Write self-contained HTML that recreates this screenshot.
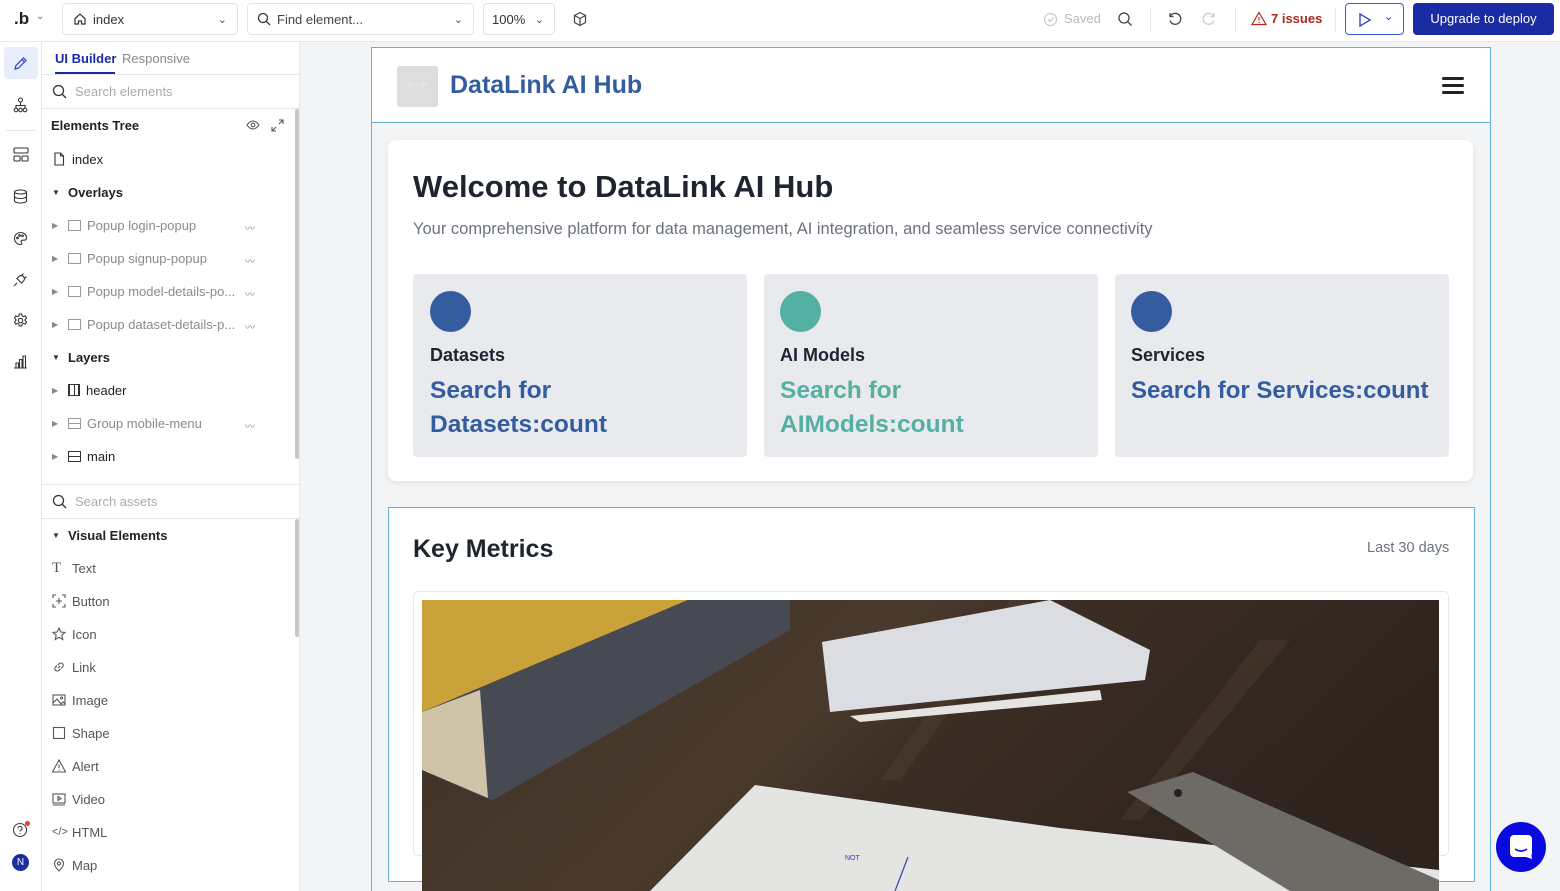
<!DOCTYPE html>
<html><head><meta charset="utf-8"><style>
*{box-sizing:border-box;margin:0;padding:0}
body{width:1560px;height:891px;overflow:hidden;font-family:"Liberation Sans",sans-serif;background:#f3f4f6;position:relative;color:#222}
.abs{position:absolute}
.top{left:0;top:0;width:1560px;height:42px;background:#fff;border-bottom:1px solid #e5e7eb}
.box{position:absolute;top:3px;height:32px;border:1px solid #e2e4e8;border-radius:4px;font-size:13px;color:#333;display:flex;align-items:center}
.rail{left:0;top:42px;width:42px;height:849px;background:#fff;border-right:1px solid #e5e7eb}
.side{left:42px;top:42px;width:258px;height:849px;background:#fff;border-right:1px solid #e5e7eb}
.row{position:absolute;left:10px;font-size:13px;color:#222;display:flex;align-items:center;gap:6px;height:20px}
.g{color:#8a8a8a}
.tri{font-size:8px;color:#333;width:10px}
.eye{position:absolute;left:203px;font-size:10px;color:#888}
.ic{width:14px;height:14px;display:inline-block}
</style></head><body>
<div class="abs top">
 <div class="abs" style="left:14px;top:9px;font-size:17px;font-weight:bold;color:#222">.b</div>
 <div class="abs" style="left:36px;top:11px;font-size:10px;color:#666">⌄</div>
 <div class="box" style="left:62px;width:176px;padding-left:10px"><svg class="ic" viewBox="0 0 14 14" fill="none" stroke="#333" stroke-width="1.2"><path d="M2 6.5L7 2l5 4.5V12H8.5V9h-3v3H2z"/></svg><span style="margin-left:6px">index</span><span style="position:absolute;right:10px;color:#555;font-size:11px">⌄</span></div>
 <div class="box" style="left:247px;width:227px;padding-left:9px"><svg class="ic" viewBox="0 0 14 14" fill="none" stroke="#333" stroke-width="1.3"><circle cx="6" cy="6" r="4.5"/><path d="M9.3 9.3L13 13"/></svg><span style="margin-left:6px;color:#444">Find element...</span><span style="position:absolute;right:10px;color:#555;font-size:11px">⌄</span></div>
 <div class="box" style="left:483px;width:72px;padding-left:8px">100%<span style="position:absolute;right:10px;color:#555;font-size:11px">⌄</span></div>
 <svg class="abs" style="left:572px;top:11px" width="16" height="16" viewBox="0 0 16 16" fill="none" stroke="#444" stroke-width="1.2"><path d="M8 1.5l5.5 3v7L8 14.5l-5.5-3v-7zM2.5 4.5L8 7.5l5.5-3M8 7.5v7"/></svg>
 <svg class="abs" style="left:1043px;top:12px" width="15" height="15" viewBox="0 0 15 15" fill="none" stroke="#c8c8c8" stroke-width="1.2"><circle cx="7.5" cy="7.5" r="6"/><path d="M5 7.5l2 2 3.5-4"/></svg>
 <div class="abs" style="left:1064px;top:11px;font-size:13px;color:#bbb">Saved</div>
 <svg class="abs" style="left:1117px;top:11px" width="16" height="16" viewBox="0 0 16 16" fill="none" stroke="#444" stroke-width="1.3"><circle cx="7" cy="7" r="5"/><path d="M10.6 10.6L14.5 14.5"/></svg>
 <div class="abs" style="left:1150px;top:8px;width:1px;height:24px;background:#e5e7eb"></div>
 <svg class="abs" style="left:1167px;top:11px" width="16" height="16" viewBox="0 0 16 16" fill="none" stroke="#444" stroke-width="1.3"><path d="M3.5 5A5.5 5.5 0 1 1 3 9.5"/><path d="M3 2v3.5h3.5"/></svg>
 <svg class="abs" style="left:1201px;top:11px" width="16" height="16" viewBox="0 0 16 16" fill="none" stroke="#ccc" stroke-width="1.3"><path d="M12.5 5A5.5 5.5 0 1 0 13 9.5"/><path d="M13 2v3.5H9.5"/></svg>
 <div class="abs" style="left:1235px;top:8px;width:1px;height:24px;background:#e5e7eb"></div>
 <svg class="abs" style="left:1251px;top:11px" width="16" height="15" viewBox="0 0 16 15" fill="none" stroke="#b3261e" stroke-width="1.2"><path d="M8 1.5L15 13.5H1z"/><path d="M8 6v3.5M8 11v1"/></svg>
 <div class="abs" style="left:1271px;top:11px;font-size:13px;color:#b3261e;font-weight:bold">7 issues</div>
 <div class="abs" style="left:1335px;top:8px;width:1px;height:24px;background:#e5e7eb"></div>
 <div class="abs" style="left:1345px;top:3px;width:59px;height:32px;border:1px solid #3b5bdb;border-radius:4px"><svg class="abs" style="left:12px;top:8px" width="14" height="16" viewBox="0 0 14 16" fill="none" stroke="#2233cc" stroke-width="1.3"><path d="M2 2l10 6-10 6z"/></svg><span class="abs" style="left:38px;top:6px;font-size:11px;color:#2233cc">⌄</span></div>
 <div class="abs" style="left:1413px;top:3px;width:141px;height:32px;background:#1a2ba3;border-radius:4px;color:#fff;font-size:13px;text-align:center;line-height:32px">Upgrade to deploy</div>
</div>
<div class="abs rail">
 <div class="abs" style="left:4px;top:5px;width:34px;height:32px;background:#e8edfb;border-radius:4px"></div>
 <svg class="abs" style="left:13px;top:14px" width="15" height="15" viewBox="0 0 15 15" fill="none" stroke="#2b3fc0" stroke-width="1.2"><path d="M2 13l1-3.5 7.5-7.5 2.5 2.5L5.5 12z M9 3.5l2.5 2.5"/></svg>
 <svg class="abs" style="left:13px;top:55px" width="15" height="16" viewBox="0 0 15 16" fill="none" stroke="#333" stroke-width="1.1"><circle cx="7.5" cy="3" r="2"/><path d="M7.5 5v3M3 11V8.5h9V11"/><circle cx="3" cy="13" r="1.8"/><circle cx="7.5" cy="13" r="1.8"/><circle cx="12" cy="13" r="1.8"/></svg>
 <div class="abs" style="left:6px;top:88px;width:30px;height:1px;background:#e5e7eb"></div>
 <svg class="abs" style="left:13px;top:105px" width="16" height="15" viewBox="0 0 16 15" fill="none" stroke="#333" stroke-width="1.1"><rect x="1" y="1" width="14" height="5" rx="1"/><rect x="1" y="9" width="6" height="5" rx="1"/><rect x="9" y="9" width="6" height="5" rx="1"/></svg>
 <svg class="abs" style="left:13px;top:147px" width="15" height="15" viewBox="0 0 15 15" fill="none" stroke="#333" stroke-width="1.1"><ellipse cx="7.5" cy="3" rx="6" ry="2"/><path d="M1.5 3v9c0 1 2.7 2 6 2s6-1 6-2V3M1.5 7.5c0 1 2.7 2 6 2s6-1 6-2"/></svg>
 <svg class="abs" style="left:13px;top:189px" width="15" height="15" viewBox="0 0 15 15" fill="none" stroke="#333" stroke-width="1.1"><path d="M7.5 1.5a6 6 0 1 0 0 12c1.5 0 1.5-1.5.8-2.3-.7-.8 0-2 1-2h2.2a2.5 2.5 0 0 0 2-2.5c0-2.8-2.7-5.2-6-5.2z"/><circle cx="4.5" cy="7" r=".8"/><circle cx="6.5" cy="4.5" r=".8"/><circle cx="9.5" cy="4.8" r=".8"/></svg>
 <svg class="abs" style="left:13px;top:230px" width="15" height="15" viewBox="0 0 15 15" fill="none" stroke="#333" stroke-width="1.1"><path d="M1 14l3-3M4 6.5l4.5 4.5 2-2a3 3 0 0 0-4.5-4.5zM8 4l2.5-2.5M11 7l2.5-2.5"/></svg>
 <svg class="abs" style="left:13px;top:271px" width="15" height="15" viewBox="0 0 15 15" fill="none" stroke="#333" stroke-width="1.1"><circle cx="7.5" cy="7.5" r="2.2"/><path d="M6.3 1h2.4l.4 1.8 1.5.8 1.7-.7 1.2 2-1.3 1.3v1.6l1.3 1.3-1.2 2-1.7-.7-1.5.8-.4 1.8H6.3l-.4-1.8-1.5-.8-1.7.7-1.2-2 1.3-1.3V6.2L1.5 4.9l1.2-2 1.7.7 1.5-.8z"/></svg>
 <svg class="abs" style="left:13px;top:312px" width="15" height="15" viewBox="0 0 15 15" fill="none" stroke="#333" stroke-width="1.1"><path d="M1 14h13M3 14V9h2.5v5M6.5 14V5.5H9V14M10 14V2h2.5v12"/></svg>
 <svg class="abs" style="left:12px;top:780px" width="16" height="16" viewBox="0 0 16 16" fill="none" stroke="#444" stroke-width="1.1"><circle cx="8" cy="8" r="6.5"/><path d="M6 6.3a2 2 0 1 1 2.5 2c-.5.2-.5.6-.5 1.2M8 11.3v.7"/></svg>
 <div class="abs" style="left:25px;top:779px;width:5px;height:5px;border-radius:50%;background:#e53935"></div>
 <div class="abs" style="left:12px;top:812px;width:17px;height:17px;border-radius:50%;background:#1a2ba3;color:#fff;font-size:10px;text-align:center;line-height:17px">N</div>
</div>
<div class="abs side">
 <div class="abs" style="left:13px;top:9px;font-size:13px;color:#1a2ba3;font-weight:bold">UI Builder</div>
 <div class="abs" style="left:13px;top:30px;width:60px;height:2px;background:#1a2ba3"></div>
 <div class="abs" style="left:80px;top:9px;font-size:13px;color:#888">Responsive</div>
 <div class="abs" style="left:0;top:32px;width:258px;height:1px;background:#e5e7eb"></div>
 <svg class="abs" style="left:10px;top:42px" width="15" height="15" viewBox="0 0 15 15" fill="none" stroke="#333" stroke-width="1.3"><circle cx="6.5" cy="6.5" r="5"/><path d="M10 10l4 4"/></svg>
 <div class="abs" style="left:33px;top:42px;font-size:13px;color:#aaa">Search elements</div>
 <div class="abs" style="left:0;top:66px;width:258px;height:1px;background:#e5e7eb"></div>
 <div class="abs" style="left:253px;top:67px;width:4px;height:350px;background:#c8c8c8;border-radius:2px"></div>
 <div class="abs" style="left:9px;top:76px;font-size:13px;font-weight:bold;color:#222">Elements Tree</div>
 <svg class="abs" style="left:204px;top:78px" width="14" height="10" viewBox="0 0 14 10" fill="none" stroke="#555" stroke-width="1.1"><path d="M1 5s2.5-4 6-4 6 4 6 4-2.5 4-6 4-6-4-6-4z"/><circle cx="7" cy="5" r="1.8"/></svg>
 <svg class="abs" style="left:229px;top:77px" width="13" height="13" viewBox="0 0 13 13" fill="none" stroke="#555" stroke-width="1.1"><path d="M8 1h4v4M12 1L8 5M5 12H1V8M1 12l4-4"/></svg>
 <div class="row" style="top:107px"><svg class="ic" viewBox="0 0 14 14" fill="none" stroke="#333" stroke-width="1.1"><path d="M3 1h5.5L11.5 4v9H3zM8.5 1v3h3"/></svg>index</div>
 <div class="row" style="top:140px"><span class="tri">▼</span><b>Overlays</b></div>
 <div class="row g" style="top:173px"><span class="tri" style="color:#888">▶</span><span style="width:13px;height:11px;border:1px solid #999;display:inline-block"></span>Popup login-popup</div><div class="eye" style="top:178px">〰</div>
 <div class="row g" style="top:206px"><span class="tri" style="color:#888">▶</span><span style="width:13px;height:11px;border:1px solid #999;display:inline-block"></span>Popup signup-popup</div><div class="eye" style="top:211px">〰</div>
 <div class="row g" style="top:239px"><span class="tri" style="color:#888">▶</span><span style="width:13px;height:11px;border:1px solid #999;display:inline-block"></span>Popup model-details-po...</div><div class="eye" style="top:244px">〰</div>
 <div class="row g" style="top:272px"><span class="tri" style="color:#888">▶</span><span style="width:13px;height:11px;border:1px solid #999;display:inline-block"></span>Popup dataset-details-p...</div><div class="eye" style="top:277px">〰</div>
 <div class="row" style="top:305px"><span class="tri">▼</span><b>Layers</b></div>
 <div class="row" style="top:338px"><span class="tri" style="color:#888">▶</span><span style="width:12px;height:12px;border:1.3px solid #333;display:inline-block;border-left-width:2px;border-right-width:2px;background:linear-gradient(90deg,transparent 4px,#333 4px,#333 5px,transparent 5px)"></span>header</div>
 <div class="row g" style="top:371px"><span class="tri" style="color:#888">▶</span><span style="width:13px;height:11px;border:1px solid #999;display:inline-block;background:linear-gradient(transparent 4px,#999 4px,#999 5px,transparent 5px)"></span>Group mobile-menu</div><div class="eye" style="top:376px">〰</div>
 <div class="row" style="top:404px"><span class="tri" style="color:#888">▶</span><span style="width:13px;height:11px;border:1.3px solid #333;display:inline-block;background:linear-gradient(transparent 4px,#333 4px,#333 5px,transparent 5px)"></span>main</div>
 <div class="abs" style="left:0;top:442px;width:258px;height:1px;background:#e5e7eb"></div>
 <svg class="abs" style="left:10px;top:452px" width="15" height="15" viewBox="0 0 15 15" fill="none" stroke="#333" stroke-width="1.3"><circle cx="6.5" cy="6.5" r="5"/><path d="M10 10l4 4"/></svg>
 <div class="abs" style="left:33px;top:452px;font-size:13px;color:#aaa">Search assets</div>
 <div class="abs" style="left:0;top:476px;width:258px;height:1px;background:#e5e7eb"></div>
 <div class="abs" style="left:253px;top:477px;width:4px;height:118px;background:#c8c8c8;border-radius:2px"></div>
 <div class="row" style="top:483px"><span class="tri">▼</span><b>Visual Elements</b></div>
 <div class="row g" style="top:516px;color:#555"><span style="width:14px;font-family:'Liberation Serif',serif;font-size:15px;color:#555">T</span>Text</div>
 <div class="row" style="top:549px;color:#555"><svg class="ic" viewBox="0 0 14 14" fill="none" stroke="#555" stroke-width="1.1"><path d="M1 4V1h3M10 1h3v3M13 10v3h-3M4 13H1v-3M7 4v6M4 7h6"/></svg>Button</div>
 <div class="row" style="top:582px;color:#555"><svg class="ic" viewBox="0 0 14 14" fill="none" stroke="#555" stroke-width="1.1"><path d="M7 1l1.8 4 4.2.4-3.2 2.8 1 4.3L7 10.3 3.2 12.5l1-4.3L1 5.4l4.2-.4z"/></svg>Icon</div>
 <div class="row" style="top:615px;color:#555"><svg class="ic" viewBox="0 0 14 14" fill="none" stroke="#555" stroke-width="1.1"><path d="M6 8l2-2M5 5.5L3.5 7a2.3 2.3 0 0 0 3.3 3.3L8.3 9M9 8.5l1.5-1.5a2.3 2.3 0 0 0-3.3-3.3L5.7 5"/></svg>Link</div>
 <div class="row" style="top:648px;color:#555"><svg class="ic" viewBox="0 0 14 14" fill="none" stroke="#555" stroke-width="1.1"><rect x="1" y="2" width="12" height="10"/><path d="M1 10l4-4 4 5 2-2 2 2"/><circle cx="9.5" cy="5" r="1"/></svg>Image</div>
 <div class="row" style="top:681px;color:#555"><svg class="ic" viewBox="0 0 14 14" fill="none" stroke="#555" stroke-width="1.1"><rect x="1.5" y="1.5" width="11" height="11"/></svg>Shape</div>
 <div class="row" style="top:714px;color:#555"><svg class="ic" viewBox="0 0 14 14" fill="none" stroke="#555" stroke-width="1.1"><path d="M7 1l6.5 12H.5zM7 5.5v3.5M7 10.5v1"/></svg>Alert</div>
 <div class="row" style="top:747px;color:#555"><svg class="ic" viewBox="0 0 14 14" fill="none" stroke="#555" stroke-width="1.1"><rect x="1" y="2" width="12" height="9"/><path d="M1 13h12M6 4.5v4l3-2z"/></svg>Video</div>
 <div class="row" style="top:780px;color:#555"><span style="width:14px;font-size:11px">&lt;/&gt;</span>HTML</div>
 <div class="row" style="top:813px;color:#555"><svg class="ic" viewBox="0 0 14 14" fill="none" stroke="#555" stroke-width="1.1"><path d="M7 13s-4.5-4.5-4.5-7.5a4.5 4.5 0 0 1 9 0C11.5 8.5 7 13 7 13z"/><circle cx="7" cy="5.5" r="1.6"/></svg>Map</div>
</div>
<div class="abs" style="left:371px;top:47px;width:1120px;height:844px;background:#f3f4f6;border:1px solid #6aaee0;border-bottom:none"></div>
<div class="abs" style="left:372px;top:48px;width:1118px;height:75px;background:#fff;border-bottom:1px solid #6aaee0"></div>
<div class="abs" style="left:397px;top:66px;width:41px;height:41px;background:#ddd;border-radius:3px;color:#eee;font-size:6px;text-align:center;line-height:41px">50 × 50</div>
<div class="abs" style="left:450px;top:71px;font-size:25px;font-weight:bold;color:#345da0">DataLink AI Hub</div>
<div class="abs" style="left:1442px;top:77px;width:22px;height:3px;background:#222;border-radius:2px;box-shadow:0 7px 0 #222,0 14px 0 #222"></div>
<div class="abs" style="left:388px;top:140px;width:1085px;height:341px;background:#fff;border-radius:8px;box-shadow:0 2px 6px rgba(0,0,0,.08)"></div>
<div class="abs" style="left:413px;top:169px;font-size:31px;font-weight:bold;color:#1f2530">Welcome to DataLink AI Hub</div>
<div class="abs" style="left:413px;top:220px;font-size:16.5px;color:#6b7280">Your comprehensive platform for data management, AI integration, and seamless service connectivity</div>
<div class="abs" style="left:413px;top:274px;width:334px;height:183px;background:#e9eaee;border-radius:4px"></div>
<div class="abs" style="left:764px;top:274px;width:334px;height:183px;background:#e9eaee;border-radius:4px"></div>
<div class="abs" style="left:1115px;top:274px;width:334px;height:183px;background:#e9eaee;border-radius:4px"></div>
<div class="abs" style="left:430px;top:291px;width:41px;height:41px;border-radius:50%;background:#345da0"></div>
<div class="abs" style="left:780px;top:291px;width:41px;height:41px;border-radius:50%;background:#55b0a4"></div>
<div class="abs" style="left:1131px;top:291px;width:41px;height:41px;border-radius:50%;background:#345da0"></div>
<div class="abs" style="left:430px;top:345px;font-size:18px;font-weight:bold;color:#1f2530">Datasets</div>
<div class="abs" style="left:780px;top:345px;font-size:18px;font-weight:bold;color:#1f2530">AI Models</div>
<div class="abs" style="left:1131px;top:345px;font-size:18px;font-weight:bold;color:#1f2530">Services</div>
<div class="abs" style="left:430px;top:374px;font-size:24.5px;font-weight:bold;color:#345da0;line-height:34px">Search for<br>Datasets:count</div>
<div class="abs" style="left:780px;top:374px;font-size:24.5px;font-weight:bold;color:#55b0a4;line-height:34px">Search for<br>AIModels:count</div>
<div class="abs" style="left:1131px;top:374px;font-size:24px;font-weight:bold;color:#345da0;line-height:34px;white-space:nowrap">Search for Services:count</div>
<div class="abs" style="left:388px;top:507px;width:1087px;height:375px;background:#fff;border:1px solid #6aaee0"></div>
<div class="abs" style="left:413px;top:535px;font-size:25px;font-weight:bold;color:#1f2530">Key Metrics</div>
<div class="abs" style="left:1367px;top:540px;font-size:14.5px;color:#6b7280">Last 30 days</div>
<div class="abs" style="left:413px;top:591px;width:1036px;height:265px;border:1px solid #e5e7eb;border-radius:5px"></div>
<svg class="abs" style="left:422px;top:600px" width="1017" height="291" viewBox="422 600 1017 291">
 <defs><linearGradient id="w" x1="0" y1="0" x2="1" y2="0.3"><stop offset="0" stop-color="#3e3027"/><stop offset=".45" stop-color="#4a3a2d"/><stop offset=".6" stop-color="#3a2d24"/><stop offset="1" stop-color="#2e241e"/></linearGradient></defs>
 <rect x="422" y="600" width="1017" height="291" fill="url(#w)"/>
 <path d="M1010 600L880 780 900 780 1030 600z M1260 640L1120 820 1140 820 1290 640z" fill="#5a4837" opacity=".3"/>
 <path d="M422 600H688L422 712z" fill="#c9a23a"/>
 <path d="M688 600H790L790 630 493 800 480 796 422 770 422 712z" fill="#474a52"/>
 <path d="M422 712L480 690 488 798 422 770z" fill="#cfc3a8"/>
 <path d="M822 642L1050 600 1150 650 1145 680 830 712z" fill="#dcdde2"/>
 <path d="M850 716L1100 690 1102 700 860 722z" fill="#e6e4e0"/>
 <path d="M755 785L1060 828 1439 870 1439 891 650 891z" fill="#e4e4e2"/>
 <path d="M1127 792L1193 772 1439 880 1439 891 1290 891z" fill="#6e6a66"/>
 <circle cx="1178" cy="793" r="4" fill="#222"/>
 <path d="M908 857L895 891" stroke="#3344aa" stroke-width="1.2"/>
 <text x="845" y="860" font-size="7" fill="#3344aa" font-family="Liberation Sans">NOT</text>
</svg>
<div class="abs" style="left:1496px;top:822px;width:50px;height:50px;border-radius:50%;background:#0a0adf"></div>
<div class="abs" style="left:1510px;top:835px;width:22px;height:22px;border-radius:4px;background:#fff"></div>
<svg class="abs" style="left:1510px;top:835px" width="22" height="24" viewBox="0 0 22 24"><path d="M5 14q6 4 12 0" stroke="#0a0adf" stroke-width="1.6" fill="none"/><path d="M16 22l6 2-1-6z" fill="#fff"/></svg>
</body></html>
